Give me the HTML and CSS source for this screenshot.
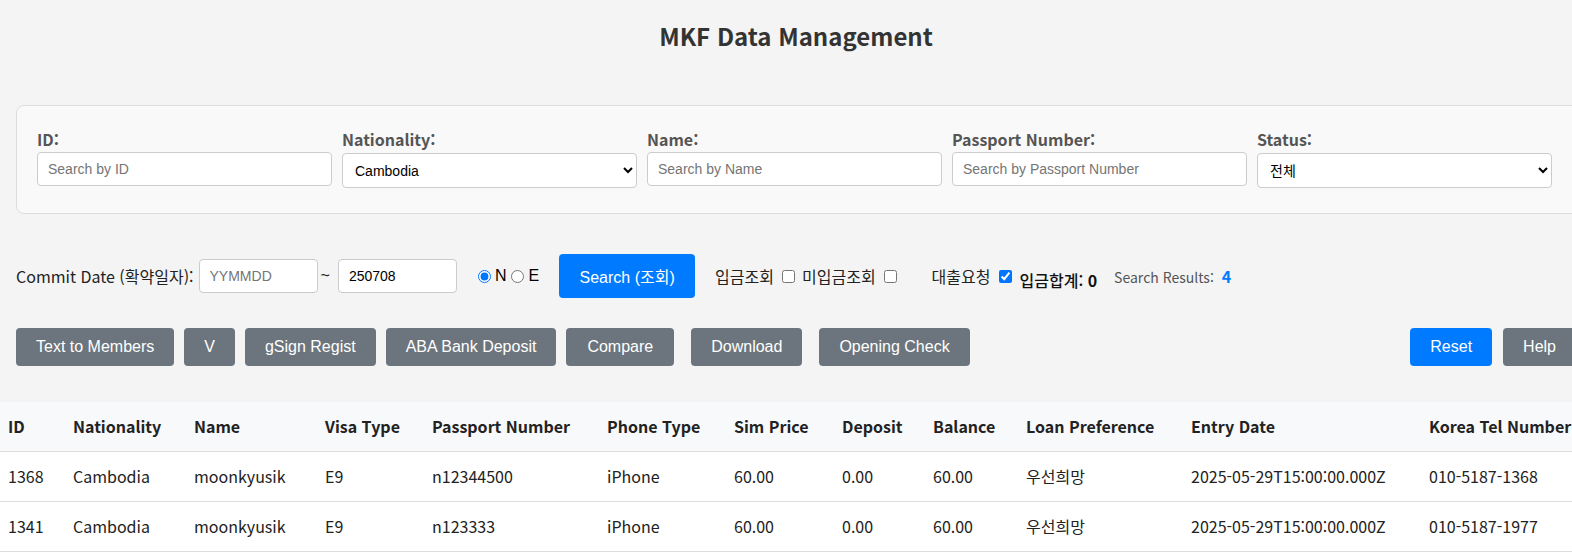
FILE: index.html
```html
<!DOCTYPE html>
<html lang="ko">
<head>
<meta charset="utf-8">
<title>MKF Data Management</title>
<link rel="stylesheet" href="styles.css">
</head>
<body>
<div class="page">
  <h1 class="title">MKF Data Management</h1>

  <div class="filters">
    <div class="field">
      <label class="field-label">ID:</label>
      <input class="control" type="text" placeholder="Search by ID">
    </div>
    <div class="field">
      <label class="field-label">Nationality:</label>
      <select class="control select">
        <option>Cambodia</option>
      </select>
    </div>
    <div class="field">
      <label class="field-label">Name:</label>
      <input class="control" type="text" placeholder="Search by Name">
    </div>
    <div class="field">
      <label class="field-label">Passport Number:</label>
      <input class="control" type="text" placeholder="Search by Passport Number">
    </div>
    <div class="field">
      <label class="field-label">Status:</label>
      <select class="control select">
        <option>전체</option>
      </select>
    </div>
  </div>

  <div class="commit-row">
    <span class="commit-label">Commit Date (확약일자):</span>
    <input class="control date" type="text" placeholder="YYMMDD">
    <span class="tilde">~</span>
    <input class="control date" type="text" value="250708">
    <label class="radio first"><input type="radio" name="ne" checked><span>N</span></label>
    <label class="radio"><input type="radio" name="ne"><span>E</span></label>
    <button class="btn btn-primary btn-search">Search (조회)</button>
    <span class="chk-text chk-first">입금조회</span>
    <input class="chk" type="checkbox">
    <span class="chk-text">미입금조회</span>
    <input class="chk" type="checkbox">
    <span class="chk-text chk-loan">대출요청</span>
    <input class="chk" type="checkbox" checked>
    <span class="sum">입금합계: <b>0</b></span>
    <span class="results">Search Results: <b>4</b></span>
  </div>

  <div class="actions">
    <div class="actions-left">
      <button class="btn btn-secondary">Text to Members</button>
      <button class="btn btn-secondary">V</button>
      <button class="btn btn-secondary">gSign Regist</button>
      <button class="btn btn-secondary">ABA Bank Deposit</button>
      <button class="btn btn-secondary btn-compare">Compare</button>
      <button class="btn btn-secondary btn-wide-gap">Download</button>
      <button class="btn btn-secondary btn-wide-gap">Opening Check</button>
    </div>
    <div class="actions-right">
      <button class="btn btn-primary">Reset</button>
      <button class="btn btn-secondary">Help</button>
    </div>
  </div>
</div>

<table class="data">
  <colgroup>
    <col class="c-id"><col class="c-nat"><col class="c-name"><col class="c-visa"><col class="c-pass"><col class="c-phone"><col class="c-sim"><col class="c-dep"><col class="c-bal"><col class="c-loan"><col class="c-entry"><col class="c-tel">
  </colgroup>
  <thead>
    <tr>
      <th>ID</th><th>Nationality</th><th>Name</th><th>Visa Type</th><th>Passport Number</th><th>Phone Type</th><th>Sim Price</th><th>Deposit</th><th>Balance</th><th>Loan Preference</th><th>Entry Date</th><th>Korea Tel Number</th>
    </tr>
  </thead>
  <tbody>
    <tr>
      <td>1368</td><td>Cambodia</td><td>moonkyusik</td><td>E9</td><td>n12344500</td><td>iPhone</td><td>60.00</td><td>0.00</td><td>60.00</td><td>우선희망</td><td>2025-05-29T15:00:00.000Z</td><td>010-5187-1368</td>
    </tr>
    <tr>
      <td>1341</td><td>Cambodia</td><td>moonkyusik</td><td>E9</td><td>n123333</td><td>iPhone</td><td>60.00</td><td>0.00</td><td>60.00</td><td>우선희망</td><td>2025-05-29T15:00:00.000Z</td><td>010-5187-1977</td>
    </tr>
    <tr>
      <td>1340</td><td>Cambodia</td><td>moonkyusik</td><td>E9</td><td>n123332</td><td>iPhone</td><td>60.00</td><td>0.00</td><td>60.00</td><td>우선희망</td><td>2025-05-29T15:00:00.000Z</td><td>010-5187-1976</td>
    </tr>
  </tbody>
</table>
</body>
</html>
```

FILE: styles.css
```css
html, body {
  margin: 0;
  padding: 0;
  overflow: hidden;
}

body {
  background: #f4f4f4;
  font-family: "Noto Sans CJK KR", "Noto Sans", sans-serif;
  font-size: 16px;
  color: #222;
}

.page {
  width: 1560px;
  padding-left: 16px;
}

.title {
  margin: 18px 0 0;
  text-align: center;
  font-size: 24px;
  font-weight: 700;
  color: #333;
}

.filters {
  box-sizing: border-box;
  width: 1564px;
  margin-top: 52px;
  padding: 21px 20px 25px;
  background: #f9f9f9;
  border: 1px solid #ddd;
  border-radius: 8px;
  display: grid;
  grid-template-columns: repeat(5, 295px);
  column-gap: 10px;
}

.field {
  display: flex;
  flex-direction: column;
}

.field-label {
  font-weight: 700;
  color: #555;
  margin-bottom: 1px;
}

.control {
  box-sizing: border-box;
  height: 34px;
  padding: 0 10px;
  border: 1px solid #ccc;
  border-radius: 4px;
  background: #fff;
  font-family: "Liberation Sans", "Noto Sans CJK KR", sans-serif;
  font-size: 14px;
  color: #000;
  width: 100%;
}

.control::placeholder {
  color: #757575;
}

.select {
  height: 35px;
  padding: 0 8px;
  margin-top: 1px;
}

.commit-row {
  display: flex;
  align-items: center;
  margin-top: 40px;
  height: 44px;
}

.commit-label {
  color: #222;
}

.date {
  width: 119px;
  height: 34px;
  margin-left: 5px;
}

.tilde {
  margin: 0 3px;
  font-family: "Liberation Sans", sans-serif;
}

.radio {
  display: flex;
  align-items: center;
  font-family: "Liberation Sans", sans-serif;
  font-size: 16px;
  color: #000;
}

.radio input {
  margin: 0 4px 0 0;
  width: 13px;
  height: 13px;
}

.radio.first {
  margin-left: 21px;
  margin-right: 5px;
}

.btn {
  border: none;
  border-radius: 4px;
  height: 38px;
  padding: 0 20px;
  font-family: "Liberation Sans", "Noto Sans CJK KR", sans-serif;
  font-size: 16px;
  color: #fff;
  cursor: pointer;
}

.btn-primary {
  background: #007bff;
}

.btn-secondary {
  background: #6c757d;
}

.btn-search {
  height: 44px;
  width: 136px;
  margin-left: 20px;
}

.chk-text {
  color: #222;
}

.chk-first {
  margin-left: 20px;
}

.chk {
  margin: 0 7px 0 8px;
  width: 13px;
  height: 13px;
}

.chk-loan {
  margin-left: 28px;
}

.sum {
  margin-left: 1px;
  margin-top: 8px;
  font-weight: 500;
  color: #111;
}

.sum b {
  font-weight: 700;
}

.results {
  margin-left: 17px;
  font-size: 14px;
  color: #555;
}

.results b {
  font-size: 16px;
  color: #007bff;
  margin-left: 4px;
}

.actions {
  display: flex;
  justify-content: space-between;
  margin-top: 30px;
}

.actions-left,
.actions-right {
  display: flex;
  gap: 10px;
}

.actions-right {
  gap: 11px;
}

.btn-compare {
  padding: 0 21px;
}

.btn-wide-gap {
  margin-left: 7px;
}

.data {
  margin-top: 36px;
  width: 1577px;
  border-collapse: collapse;
  table-layout: fixed;
  background: #fff;
}

.data th,
.data td {
  text-align: left;
  padding: 12px 8px;
  line-height: 25px;
  border-bottom: 1px solid #ddd;
  white-space: nowrap;
  overflow: hidden;
}

.data th {
  background: #f8f9fa;
  font-weight: 700;
  color: #222;
}

.data td {
  color: #222;
}

.c-id { width: 65px; }
.c-nat { width: 121px; }
.c-name { width: 131px; }
.c-visa { width: 107px; }
.c-pass { width: 175px; }
.c-phone { width: 127px; }
.c-sim { width: 108px; }
.c-dep { width: 91px; }
.c-bal { width: 93px; }
.c-loan { width: 165px; }
.c-entry { width: 238px; }
.c-tel { width: 156px; }
```
